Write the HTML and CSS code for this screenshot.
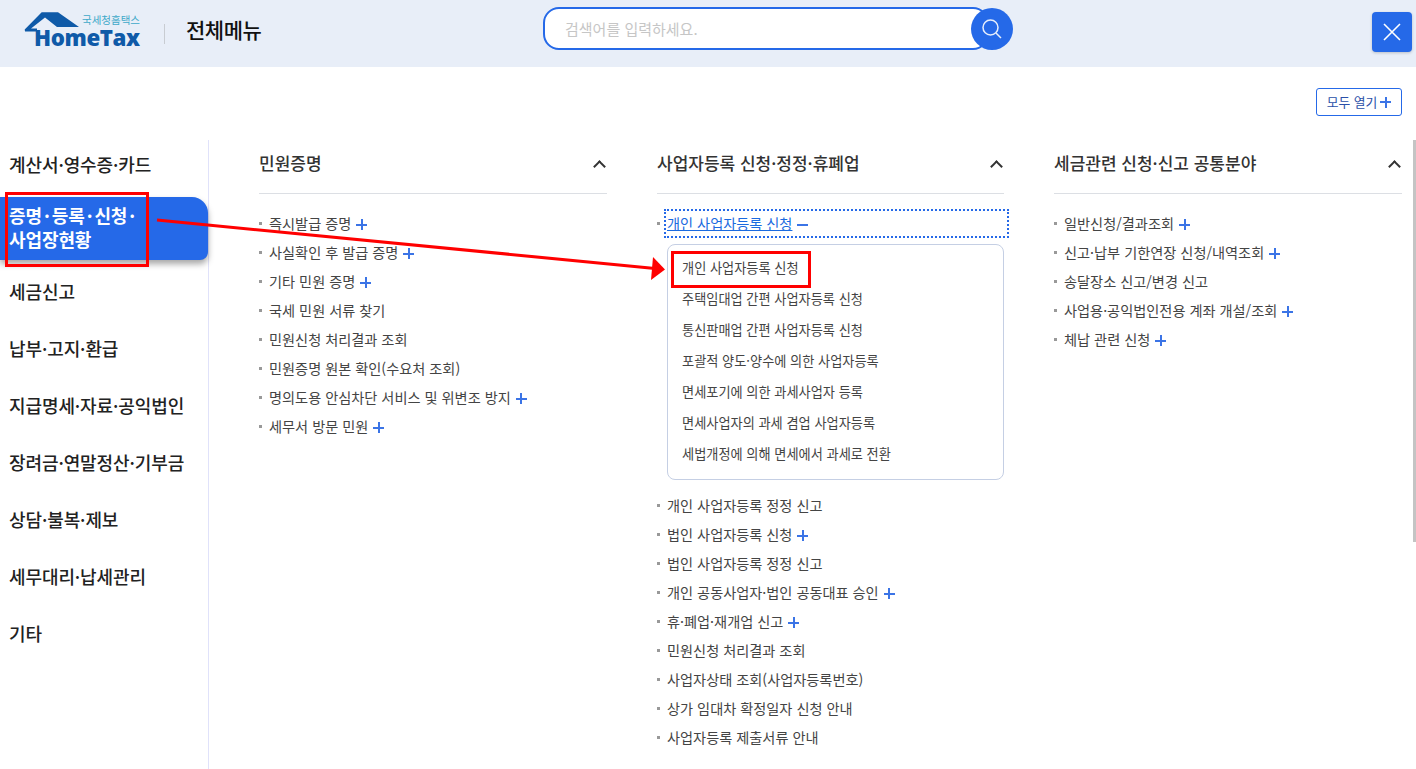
FILE: index.html
```html
<!DOCTYPE html>
<html lang="ko">

<head>
    <meta charset="UTF-8">
    <meta name="viewport" content="width=device-width, initial-scale=1.0">
    <title>전체메뉴</title>
    <link rel="stylesheet" href="styles.css">
</head>

<body>
    <header class="top">
        <div class="logo">
            <svg class="roof" width="84" height="27" viewBox="0 0 84 27">
                <path d="M0.700 17.500 L17.700 0.200 H34 L55 15 H33 L21 5.500 L7 16.500 H13 V19.500 H1 Z" fill="#0f5aa8"></path>
            </svg>
            <span class="logo-ko">국세청홈택스</span>
            <span class="logo-en">HomeTax</span>
        </div>
        <span class="top-line"></span>
        <h1 class="top-title">전체메뉴</h1>
        <div class="search">
            <div class="search-box">검색어를 입력하세요.</div>
            <button class="search-btn">
                <svg width="24" height="24" viewBox="0 0 24 24" fill="none" stroke="#e6eefc" stroke-width="1.5">
                    <circle cx="10.5" cy="10.5" r="7.5"></circle>
                    <path d="M16 16 L21 21"></path>
                </svg>
            </button>
        </div>
        <button class="close-btn">
            <svg width="20" height="20" viewBox="0 0 20 20" stroke="#fff" stroke-width="1.6">
                <path d="M2 2 L18 18 M18 2 L2 18"></path>
            </svg>
        </button>
    </header>

    <div class="open-row">
        <button class="open-all">모두 열기<span class="open-plus"></span></button>
    </div>

    <div class="menu">
        <ul class="side">
            <li>계산서·영수증·카드</li>
            <li class="active">증명<span class="dot">·</span>등록<span class="dot">·</span>신청<span class="dot">·</span><br>사업장현황</li>
            <li>세금신고</li>
            <li>납부·고지·환급</li>
            <li>지급명세·자료·공익법인</li>
            <li>장려금·연말정산·기부금</li>
            <li>상담·불복·제보</li>
            <li>세무대리·납세관리</li>
            <li>기타</li>
        </ul>

        <div class="cols">
            <section class="col">
                <div class="col-head">민원증명<span class="chev"></span></div>
                <ul class="list">
                    <li>즉시발급 증명<i class="plus"></i></li>
                    <li>사실확인 후 발급 증명<i class="plus"></i></li>
                    <li>기타 민원 증명<i class="plus"></i></li>
                    <li>국세 민원 서류 찾기</li>
                    <li>민원신청 처리결과 조회</li>
                    <li>민원증명 원본 확인(수요처 조회)</li>
                    <li>명의도용 안심차단 서비스 및 위변조 방지<i class="plus"></i></li>
                    <li>세무서 방문 민원<i class="plus"></i></li>
                </ul>
            </section>

            <section class="col">
                <div class="col-head">사업자등록 신청·정정·휴폐업<span class="chev"></span></div>
                <ul class="list">
                    <li class="focus"><a>개인 사업자등록 신청</a><i class="minus"></i></li>
                    <li class="sub-wrap">
                        <div class="sub">
                            <div class="sub-item">개인 사업자등록 신청</div>
                            <div class="sub-item">주택임대업 간편 사업자등록 신청</div>
                            <div class="sub-item">통신판매업 간편 사업자등록 신청</div>
                            <div class="sub-item">포괄적 양도·양수에 의한 사업자등록</div>
                            <div class="sub-item">면세포기에 의한 과세사업자 등록</div>
                            <div class="sub-item">면세사업자의 과세 겸업 사업자등록</div>
                            <div class="sub-item">세법개정에 의해 면세에서 과세로 전환</div>
                        </div>
                    </li>
                    <li>개인 사업자등록 정정 신고</li>
                    <li>법인 사업자등록 신청<i class="plus"></i></li>
                    <li>법인 사업자등록 정정 신고</li>
                    <li>개인 공동사업자·법인 공동대표 승인<i class="plus"></i></li>
                    <li>휴·폐업·재개업 신고<i class="plus"></i></li>
                    <li>민원신청 처리결과 조회</li>
                    <li>사업자상태 조회(사업자등록번호)</li>
                    <li>상가 임대차 확정일자 신청 안내</li>
                    <li>사업자등록 제출서류 안내</li>
                </ul>
            </section>

            <section class="col">
                <div class="col-head">세금관련 신청·신고 공통분야<span class="chev"></span></div>
                <ul class="list">
                    <li>일반신청/결과조회<i class="plus"></i></li>
                    <li>신고·납부 기한연장 신청/내역조회<i class="plus"></i></li>
                    <li>송달장소 신고/변경 신고</li>
                    <li>사업용·공익법인전용 계좌 개설/조회<i class="plus"></i></li>
                    <li>체납 관련 신청<i class="plus"></i></li>
                </ul>
            </section>
        </div>
    </div>

    <div class="scroll-thumb"></div>

    <!-- red marks drawn over the page -->
    <div class="mark mark-side"></div>
    <div class="mark mark-sub"></div>
    <svg class="arrow" width="1416" height="769" viewBox="0 0 1416 769">
        <path d="M157 220 L655 268.500" stroke="#f00" stroke-width="3"></path>
        <path d="M665 269.500 L653 257 L651 280 Z" fill="#f00"></path>
    </svg>
</body>

</html>
```

FILE: styles.css
```css
* {
    box-sizing: border-box;
}

html,
body {
    height: 100%;
}

body {
    margin: 0;
    overflow: hidden;
    background-color: #fff;
    color: #333;
    font-family: "Noto Sans CJK KR", "Noto Sans", sans-serif;
    position: relative;
}

ul {
    list-style: none;
    margin: 0;
    padding: 0;
}

button {
    font-family: inherit;
    cursor: pointer;
}

.top {
    height: 67px;
    background-color: #e8eef8;
    display: flex;
    align-items: center;
    padding-left: 24px;
    position: relative;
}

.logo {
    position: relative;
    width: 117px;
    height: 40px;
    margin-top: -2px;
}

.roof {
    position: absolute;
    left: 0;
    top: -1px;
}

.logo-ko {
    position: absolute;
    left: 58px;
    top: 0;
    font-size: 10.500px;
    line-height: 14px;
    color: #3fa9c9;
    white-space: nowrap;
}

.logo-en {
    position: absolute;
    left: 10px;
    top: 15px;
    font-family: "Open Sans", sans-serif;
    font-size: 22.300px;
    line-height: 20px;
    font-weight: 800;
    letter-spacing: -0.4px;
    color: #0f5aa8;
}

.top-line {
    width: 1px;
    height: 20px;
    background-color: #c8ccd2;
    margin-left: 23px;
}

.top-title {
    margin: -10px 0 0 21px;
    font-size: 21px;
    line-height: 30px;
    font-weight: 500;
    color: #111;
    letter-spacing: -0.5px;
}

.search {
    position: absolute;
    left: 543px;
    top: 7px;
    display: flex;
    align-items: center;
}

.search-box {
    width: 446px;
    height: 43px;
    border: 2px solid #2569e8;
    border-radius: 16px;
    background-color: #fff;
    padding-left: 20px;
    font-size: 15px;
    line-height: 39px;
    color: #c6c6c6;
}

.search-btn {
    width: 42px;
    height: 42px;
    border: none;
    border-radius: 50%;
    background-color: #2569e8;
    margin-left: -18px;
    padding: 0;
    display: flex;
    align-items: center;
    justify-content: center;
    position: relative;
}

.close-btn {
    position: absolute;
    left: 1372px;
    top: 12px;
    width: 40px;
    height: 40px;
    border: none;
    border-radius: 4px;
    background-color: #2569e8;
    box-shadow: 0 1px 3px rgba(0, 0, 0, 0.2);
    padding: 0;
    display: flex;
    align-items: center;
    justify-content: center;
}

.open-row {
    height: 73px;
    display: flex;
    justify-content: flex-end;
    padding: 21px 14px 0 0;
}

.open-all {
    width: 86px;
    height: 28px;
    border: 1px solid #2569e8;
    border-radius: 3px;
    background-color: #fff;
    color: #2a4fa8;
    font-size: 12.800px;
    line-height: 26px;
    padding: 0;
    display: flex;
    align-items: center;
    justify-content: center;
    gap: 3px;
}

.open-plus {
    width: 11px;
    height: 11px;
    background:
        linear-gradient(#3b74e6, #3b74e6) center / 100% 2px no-repeat,
        linear-gradient(#3b74e6, #3b74e6) center / 2px 100% no-repeat;
}

.menu {
    display: flex;
    height: 629px;
}

.side {
    width: 209px;
    flex-shrink: 0;
    border-right: 1px solid #e0e2fa;
}

.side li {
    height: 57px;
    padding-left: 9px;
    font-size: 18px;
    font-weight: 500;
    line-height: 48px;
    color: #222;
    letter-spacing: -0.1px;
}

.side li.active {
    height: 63px;
    margin-bottom: 4px;
    width: 208px;
    padding-top: 6px;
    line-height: 24px;
    color: #fff;
    font-weight: 700;
    background-color: #2569e8;
    border-radius: 0 16px 8px 0;
    box-shadow: 0 4px 6px rgba(0, 0, 0, 0.35);
}

.dot {
    padding: 0 2px;
}

.side li.active ~ li {
    line-height: 54px;
}

.cols {
    display: flex;
    padding-left: 50px;
    gap: 50px;
}

.col {
    width: 348px;
}

.col:nth-child(2) {
    width: 347px;
}

.col-head {
    height: 54px;
    border-bottom: 1px solid #dcdfe4;
    font-size: 17px;
    font-weight: 500;
    line-height: 45px;
    color: #333;
    position: relative;
}

.chev {
    position: absolute;
    right: 3px;
    top: 22px;
    width: 9px;
    height: 9px;
    border-left: 2px solid #333;
    border-top: 2px solid #333;
    transform: rotate(45deg);
}

.list {
    padding-top: 15px;
}

.list li {
    min-height: 29px;
    padding-left: 10px;
    font-size: 14.200px;
    line-height: 29px;
    color: #444;
    position: relative;
    white-space: nowrap;
}

.list li::before {
    content: "";
    position: absolute;
    left: 0;
    top: 13px;
    width: 3px;
    height: 3px;
    background-color: #999;
}

.list li.focus {
    outline: 2px dotted #2569e8;
    outline-offset: -2px;
    margin-left: 7px;
    padding-left: 3px;
    height: 29px;
    margin-right: -5px;
}

.list li.focus::before {
    left: -7px;
}

.list li.focus a {
    color: #1a6ae0;
    text-decoration: underline;
}

.list li.sub-wrap {
    padding: 6px 0 11px 10px;
}

.list li.sub-wrap::before {
    display: none;
}

.plus,
.minus {
    display: inline-block;
    width: 11px;
    height: 11px;
    margin-left: 5px;
    vertical-align: -1px;
}

.plus {
    background:
        linear-gradient(#3b74e6, #3b74e6) center / 100% 2px no-repeat,
        linear-gradient(#3b74e6, #3b74e6) center / 2px 100% no-repeat;
}

.minus {
    background: linear-gradient(#3b74e6, #3b74e6) center / 100% 2px no-repeat;
}

.sub {
    width: 337px;
    height: 236px;
    border: 1px solid #c5cfe4;
    border-radius: 8px;
    padding: 7px 14px;
}

.sub-item {
    height: 31px;
    font-size: 13.200px;
    line-height: 31px;
    color: #444;
}

.scroll-thumb {
    position: absolute;
    right: 0;
    top: 140px;
    width: 3px;
    height: 402px;
    background-color: #c4c4c4;
}

.mark {
    position: absolute;
    border: 3px solid #f00;
}

.mark-side {
    left: 5px;
    top: 192px;
    width: 144px;
    height: 75px;
}

.mark-sub {
    left: 671px;
    top: 251px;
    width: 140px;
    height: 37px;
}

.arrow {
    position: absolute;
    left: 0;
    top: 0;
    pointer-events: none;
}
```
